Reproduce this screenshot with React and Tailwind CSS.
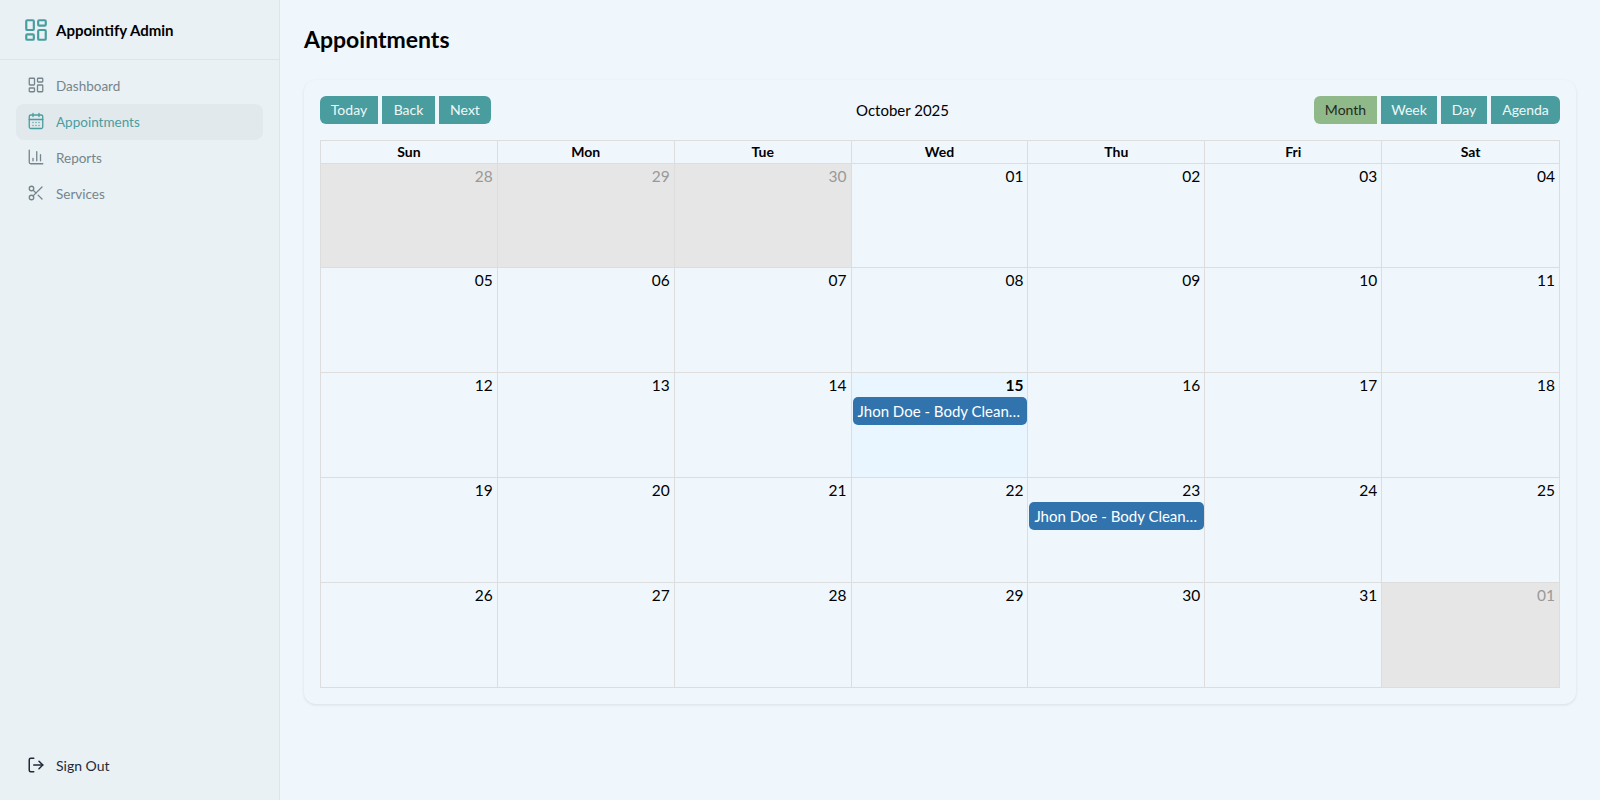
import { LayoutDashboard, CalendarDays, ChartColumn, Scissors, LogOut } from "lucide-react";

const navItems = [
	{ label: "Dashboard", icon: LayoutDashboard },
	{ label: "Appointments", icon: CalendarDays, active: true },
	{ label: "Reports", icon: ChartColumn },
	{ label: "Services", icon: Scissors }
];

const weekdays = ["Sun", "Mon", "Tue", "Wed", "Thu", "Fri", "Sat"];

const weeks = [
	["28", "29", "30", "01", "02", "03", "04"],
	["05", "06", "07", "08", "09", "10", "11"],
	["12", "13", "14", "15", "16", "17", "18"],
	["19", "20", "21", "22", "23", "24", "25"],
	["26", "27", "28", "29", "30", "31", "01"]
];

function isOffRange(weekIndex, dayIndex) {
	return (weekIndex === 0 && dayIndex < 3) || (weekIndex === 4 && dayIndex === 6);
}

function ToolbarButton({ label, active, className }) {
	return (
		<button
			type="button"
			className={`h-7 text-center text-[14px] leading-none ${active ? "bg-[#90b98a] text-[#1f2a1f]" : "bg-[#4a9d9f] text-[#eef8f8]"} ${className}`}
		>
			{label}
		</button>
	);
}

function EventChip() {
	return (
		<div className="ml-px h-7 rounded-[5px] bg-[#3174ad] px-[5px] text-[15px] leading-7 text-white truncate">
			Jhon Doe - Body Cleaning
		</div>
	);
}

export default function App() {
	return (
		<div className="flex h-screen bg-[#eff7fd] font-['Lato',sans-serif] text-black">
			{/* Sidebar */}
			<aside className="flex w-[280px] shrink-0 flex-col border-r border-[#dbe5ee] bg-[#e9f1f5]">
				<div className="flex h-[60px] items-center gap-[7px] border-b border-[#dbe5ee] pt-px pl-[23px]">
					<LayoutDashboard size={26} strokeWidth={2} className="text-[#4a9d9f]" />
					<span className="text-[15px] font-bold">Appointify Admin</span>
				</div>
				<nav className="flex flex-col px-4 pt-[8px]">
					{navItems.map((item) => (
						<a
							key={item.label}
							className={`flex h-9 items-center gap-[11px] rounded-lg pl-[11px] text-[13.5px] ${item.active ? "bg-[#e1e9ec] text-[#4a9d9f]" : "text-[#76858b]"}`}
						>
							<item.icon size={18} strokeWidth={1.75} className="-mt-0.5" />
							{item.label}
						</a>
					))}
				</nav>
				<div className="mt-auto px-4 pb-[26px]">
					<a className="flex h-[18px] items-center gap-[11px] pl-[11px] text-[14px] text-[#1f2937]">
						<LogOut size={18} strokeWidth={2} />
						Sign Out
					</a>
				</div>
			</aside>

			{/* Main */}
			<main className="flex-1 px-6 pt-[23px]">
				<h1 className="h-8 text-[23px] leading-8 font-bold">Appointments</h1>
				<div className="mt-[25px] rounded-xl bg-[#eff7fd] p-4 shadow-[0_1px_3px_rgba(0,0,0,0.1)]">
					{/* Toolbar */}
					<div className="mb-4 flex h-7 items-center">
						<div className="flex gap-1">
							<ToolbarButton label="Today" className="w-[58px] rounded-l-md" />
							<ToolbarButton label="Back" className="w-[53px]" />
							<ToolbarButton label="Next" className="w-[52px] rounded-r-md" />
						</div>
						<span className="flex-1 text-center text-[15px]">October 2025</span>
						<div className="flex gap-1">
							<ToolbarButton label="Month" active className="w-[63px] rounded-l-md" />
							<ToolbarButton label="Week" className="w-[56px]" />
							<ToolbarButton label="Day" className="w-[46px]" />
							<ToolbarButton label="Agenda" className="w-[69px] rounded-r-md" />
						</div>
					</div>

					{/* Month view */}
					<div className="border border-[#dddddd]">
						<div className="grid h-[23px] grid-cols-7 border-b border-[#dddddd]">
							{weekdays.map((day, i) => (
								<div
									key={day}
									className={`text-center text-[14px] leading-[22px] font-bold ${i < 6 ? "border-r border-[#dddddd]" : ""}`}
								>
									{day}
								</div>
							))}
						</div>
						{weeks.map((week, w) => (
							<div
								key={w}
								className={`grid grid-cols-7 ${w > 0 ? "h-[105px] border-t border-[#dddddd]" : "h-[103px]"}`}
							>
								{week.map((day, d) => {
									const off = isOffRange(w, d);
									const today = w === 2 && d === 3;
									const hasEvent = today || (w === 3 && d === 4);
									return (
										<div
											key={d}
											className={`${d < 6 ? "border-r border-[#dddddd]" : ""} ${off ? "bg-[#e6e6e6]" : ""} ${today ? "bg-[#eaf6ff]" : ""}`}
										>
											<div
												className={`h-6 pr-1 text-right text-[15.5px] leading-6 ${off ? "text-[#999999]" : ""} ${today ? "font-bold" : ""}`}
											>
												{day}
											</div>
											{hasEvent && <EventChip />}
										</div>
									);
								})}
							</div>
						))}
					</div>
				</div>
			</main>
		</div>
	);
}
